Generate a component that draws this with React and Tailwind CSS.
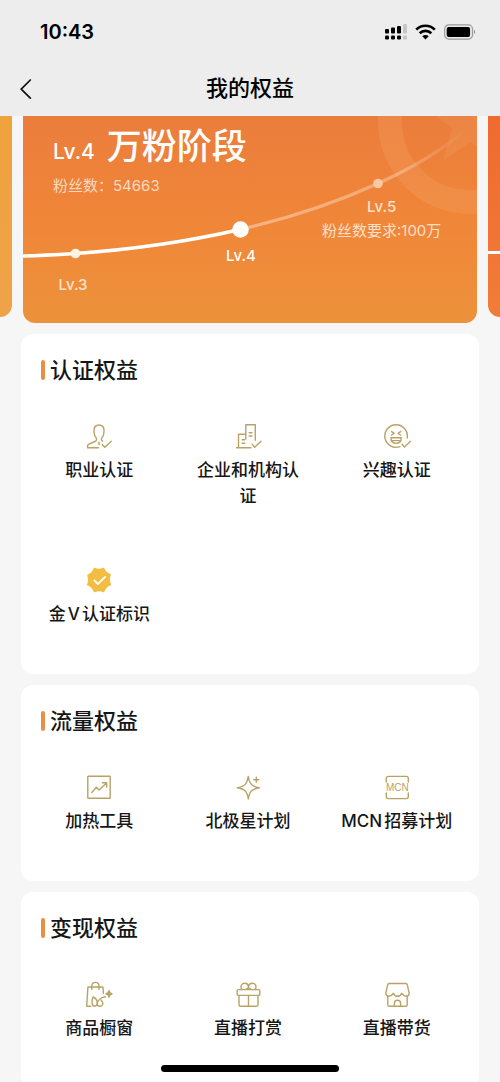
import clsx from 'clsx';

const GOLD = '#b8a266';

function LineIcon({ children }) {
  return (
    <svg
      className="h-[26px] w-7"
      viewBox="0 0 28 26"
      fill="none"
      stroke={GOLD}
      strokeWidth="1.4"
      strokeLinecap="round"
      strokeLinejoin="round"
      aria-hidden="true"
    >
      {children}
    </svg>
  );
}

function PersonIcon() {
  return (
    <LineIcon>
      <path d="M13.5 24.7H2.6v-1.8c0-.9.5-1.4 1.3-1.8l6-2.6c1.2-.5 1.7-1.2 1.7-2.3 0-1.2-.8-1.8-1.5-2.9C9.2 11.8 9 9.9 9 7.700 9 4.300 11 2 14 2s5 2.300 5 5.700c0 2.200-.2 4.100-1.100 5.600-.7 1.100-1.500 1.700-1.500 2.900 0 .9.400 1.500 1.100 1.900" />
      <path d="M14 19.200v2.600" />
      <path d="m17.200 21.500 2.600 2.800 6.400-6" />
    </LineIcon>
  );
}

function BuildingIcon() {
  return (
    <LineIcon>
      <path d="M2.600 24.700H17M4.500 24.500V11.300h7.300M11.800 16V1.700h9.500v15.600" />
      <path d="M15.200 9.800h2.800M15.200 13h2.800M8.200 16.800h2.600M8.200 20.300h2.600" />
      <path d="m18.200 21.500 2.500 2.800 6.300-6" />
    </LineIcon>
  );
}

function LaughIcon() {
  return (
    <LineIcon>
      <path d="M17 23.600A11.300 11.300 0 1 1 24.200 15" />
      <path d="m8.600 8.600 2.600 1.700-2.600 1.700M17.600 8.600 15 10.300l2.600 1.700" />
      <path d="M8 14.800h10.300c0 3.500-2 5.600-5.150 5.600S8 18.300 8 14.800ZM9.200 17.600h7.900" />
      <path d="m19 21.200 2.500 2.700 6-5.700" />
    </LineIcon>
  );
}

function GoldBadgeIcon() {
  return (
    <svg className="h-[26px] w-7" viewBox="0 0 28 26" fill="none" aria-hidden="true">
      <path
        d="M9.400 1.500Q14 3.600 18.600 1.500Q20.200 5.800 25.100 7.700Q23 13 25.300 17.600Q20.500 19.600 18.600 24.500Q14 22.400 9.400 24.500Q7.500 19.600 2.700 17.600Q5 13 2.900 8.400Q7.500 6.400 9.400 1.500Z"
        fill="#f3bd42"
        stroke="#f3bd42"
        strokeWidth="1.600"
        strokeLinejoin="round"
      />
      <path d="m9.500 13.500 3.400 3.500 7.200-7.200" stroke="#fff" strokeWidth="1.800" strokeLinecap="round" strokeLinejoin="round" />
    </svg>
  );
}

function ChartIcon() {
  return (
    <LineIcon>
      <rect x="2.800" y="2.300" width="22.400" height="22" rx=".4" />
      <path d="m6.800 18.500 4.500-5.300 2.700 2.700 7.600-7M17.400 8.700h4.300V13" />
    </LineIcon>
  );
}

function StarIcon() {
  return (
    <LineIcon>
      <path d="M14.300 2.400c1 7.300 3.600 10.200 11 11.300-7.400 1.100-10 4-11 11.300-1-7.300-3.600-10.200-11-11.300 7.400-1.100 10-4 11-11.300Z" />
      <path d="M22.300 3.200v5M19.800 5.700h5" />
    </LineIcon>
  );
}

function McnIcon() {
  return (
    <LineIcon>
      <path d="M3.300 8V4.400a2 2 0 0 1 2-2h18a2 2 0 0 1 2 2V8M3.300 19v3.600a2 2 0 0 0 2 2h18a2 2 0 0 0 2-2V19" />
      <text x="14.300" y="17" textAnchor="middle" fontSize="10" fill={GOLD} stroke="none" className="font-['Liberation_Sans',sans-serif]">
        MCN
      </text>
    </LineIcon>
  );
}

function BagIcon() {
  return (
    <LineIcon>
      <path d="M5.800 25.300H1.700L2.900 6h15l.5 6.500" />
      <path d="M6.800 8.300V5c0-2 1.500-3.600 3.600-3.600S14 3 14 5v3.300" />
      <path d="M8 16c-1.400 3.200-1.600 9.300 1.700 9.300 3.800 0 4-6.800-1.700-9.300Z" />
      <path d="M20.500 15.700c-5.500.3-9 5.500-8.200 8 .8 2.300 5 2.100 5.500-.6.300-1.600-.8-2.700-1.500-3.800" />
      <path d="M24 9.700c.4 2.200 1 2.800 3.100 3.200-2.100.4-2.700 1-3.100 3.200-.4-2.200-1-2.800-3.100-3.200 2.100-.4 2.700-1 3.100-3.200Z" fill={GOLD} />
    </LineIcon>
  );
}

function GiftIcon() {
  return (
    <LineIcon>
      <rect x="3.200" y="8.600" width="22.600" height="5.800" rx="1" />
      <path d="M5 14.400v9.300c0 1 .6 1.600 1.600 1.600h15.800c1 0 1.600-.6 1.600-1.600v-9.300M14.500 14.400v10.900" />
      <path d="M7.800 8.400C5.800 5 8 2.200 10.700 2.200c2.500 0 3.800 2 3.800 4.200 0-2.200 1.300-4.200 3.800-4.200 2.700 0 4.900 2.800 2.900 6.200M12.200 8.300l2.300-1.900 2.300 1.900" />
    </LineIcon>
  );
}

function ShopIcon() {
  return (
    <LineIcon>
      <path d="M4.700 3.700c.2-.8.600-1.200 1.400-1.200h16.800c.8 0 1.200.4 1.400 1.200l1.900 8.600c-.3 2-1.600 3-3.200 3-2.200 0-3-1.400-4.200-3-1 1.700-2.200 3-4.300 3s-3.300-1.300-4.300-3c-1.200 1.600-2 3-4.200 3-1.600 0-2.900-1-3.200-3Z" />
      <path d="M4.800 15.300v8.400c0 1 .6 1.600 1.600 1.600h16.200c1 0 1.600-.6 1.600-1.600v-8.400" />
      <path d="M11.400 25.300v-3.100c0-1.800 1.300-2.900 3.100-2.900s3.100 1.100 3.100 2.900v3.100" />
    </LineIcon>
  );
}

const sections = [
  {
    title: '认证权益',
    items: [
      { label: '职业认证', Icon: PersonIcon },
      { label: '企业和机构认证', Icon: BuildingIcon },
      { label: '兴趣认证', Icon: LaughIcon },
      { label: '金V认证标识', Icon: GoldBadgeIcon }
    ]
  },
  {
    title: '流量权益',
    items: [
      { label: '加热工具', Icon: ChartIcon },
      { label: '北极星计划', Icon: StarIcon },
      { label: 'MCN招募计划', Icon: McnIcon }
    ]
  },
  {
    title: '变现权益',
    items: [
      { label: '商品橱窗', Icon: BagIcon },
      { label: '直播打赏', Icon: GiftIcon },
      { label: '直播带货', Icon: ShopIcon }
    ]
  }
];

// label centres, as a share of the level card
const levels = [
  { name: 'Lv.3', spot: 'left-[11%] top-[76%]', tone: 'text-white/75' },
  { name: 'Lv.4', spot: 'left-[48%] top-[62%]', tone: 'text-white' },
  { name: 'Lv.5', note: '粉丝数要求:100万', spot: 'left-[79%] top-[38%]', tone: 'text-white/75' }
];

function StatusBar() {
  return (
    <div className="flex h-15 items-center justify-between pt-1 pr-6 pl-10">
      <span className="text-xl font-semibold">10:43</span>
      <div className="flex items-center gap-2">
        <svg className="h-4 w-[22px]" viewBox="0 0 22 16" aria-hidden="true">
          <g fill="#000">
            <rect x="0" y="5" width="4" height="4.500" rx="1" />
            <rect x="6" y="3.500" width="4" height="6" rx="1" />
            <rect x="12" y="2" width="4" height="7.500" rx="1" />
            <rect x="0" y="11.500" width="4" height="4" rx="1.300" />
            <rect x="6" y="11.500" width="4" height="4" rx="1.300" />
            <rect x="12" y="11.500" width="4" height="4" rx="1.300" />
          </g>
          <g fill="#c6c6c6">
            <rect x="18" y="0" width="4" height="9.500" rx="1" />
            <rect x="18" y="11.500" width="4" height="4" rx="1.300" />
          </g>
        </svg>
        <svg className="h-4 w-[21px]" viewBox="0 0 21 16" fill="none" stroke="#000" strokeWidth="2.700" aria-hidden="true">
          <path d="M1.200 5.600a13.200 13.200 0 0 1 18.600 0" />
          <path d="M4.700 9.200a8.200 8.200 0 0 1 11.600 0" />
          <path d="M7.300 12.200a4.600 4.600 0 0 1 6.400 0l-3.200 3.200Z" fill="#000" stroke="none" />
        </svg>
        <svg className="h-4 w-8" viewBox="0 0 32 16" aria-hidden="true">
          <rect x=".7" y=".9" width="27.800" height="14.200" rx="4" fill="none" stroke="#999" strokeWidth="1.200" />
          <rect x="2.700" y="2.900" width="23.400" height="10.200" rx="2" fill="#000" />
          <path d="M30 5.800c1.300.5 1.300 3.900 0 4.400Z" fill="#888" />
        </svg>
      </div>
    </div>
  );
}

function NavBar() {
  return (
    <header className="grid h-14 grid-cols-[1fr_auto_1fr] items-center px-5 pt-px">
      <button type="button" aria-label="返回" className="justify-self-start">
        <svg className="h-5 w-3" viewBox="0 0 12 20" fill="none" stroke="#111" strokeWidth="1.700" strokeLinecap="round" strokeLinejoin="round" aria-hidden="true">
          <path d="M10.300 1 1.200 10.200l9.100 9" />
        </svg>
      </button>
      <h1 className="text-[22px] font-medium">我的权益</h1>
    </header>
  );
}

function LevelCarousel() {
  return (
    <div className="flex items-start gap-[11px]">
      <div className="h-[201px] w-3 rounded-br-xl bg-gradient-to-b from-[#f0a23c] to-[#eea348]" />

      <section className="relative h-[207px] flex-1 overflow-hidden rounded-b-xl bg-gradient-to-b from-[#eb7d3c] via-[#f08638] to-[#ec923b] px-[30px] pt-1 text-white">
        <svg className="absolute inset-0 h-full w-full" viewBox="0 0 454 207" fill="none" aria-hidden="true">
          <defs>
            <linearGradient id="nextStage" x1="217" y1="0" x2="442" y2="0" gradientUnits="userSpaceOnUse">
              <stop offset="0" stopColor="#fff" stopOpacity=".38" />
              <stop offset=".7" stopColor="#fff" stopOpacity=".3" />
              <stop offset="1" stopColor="#fff" stopOpacity="0" />
            </linearGradient>
          </defs>
          <circle cx="447" cy="6" r="80" stroke="#f3a468" strokeOpacity=".28" strokeWidth="24" />
          <path d="m447-42 11 32 34 1-27 21 9 33-27-19-27 19 9-33-27-21 34-1Z" fill="#f3a468" fillOpacity=".22" />
          <path d="M0 140C20 139.500 36 138.500 52 137.500c58-4 113-12 165-24" stroke="#fff" strokeWidth="3.600" />
          <path d="M217 113.500c48-11 94-26 138-46 31-14 61-31 87-53" stroke="url(#nextStage)" strokeWidth="3.200" />
          <circle cx="52.500" cy="137.500" r="4.800" fill="#fff3e6" />
          <circle cx="217.500" cy="113.500" r="8.300" fill="#fff" />
          <circle cx="355" cy="67.500" r="4.800" fill="#f9c9a3" />
        </svg>

        <div className="relative">
          <h2 className="flex items-baseline gap-3 font-medium">
            <span className="text-[21px]">Lv.4</span>
            <span className="text-[35px] leading-[52px]">万粉阶段</span>
          </h2>
          <p className="text-[15px] leading-7 text-white/70">粉丝数：54663</p>
        </div>

        {levels.map(({ name, note, spot, tone }) => (
          <div key={name} className={clsx('absolute flex -translate-x-1/2 flex-col items-center text-[15px] leading-6 whitespace-nowrap', spot, tone)}>
            <span className="font-medium">{name}</span>
            {note && <span>{note}</span>}
          </div>
        ))}
      </section>

      <div className="h-[201px] w-3 rounded-bl-xl bg-gradient-to-b from-[#ef6a2f] to-[#f17c38] pt-[135px]">
        <div className="h-[3px] bg-white" />
      </div>
    </div>
  );
}

function BenefitSection({ title, items }) {
  return (
    <section className="rounded-xl bg-white pt-5 pb-[47px]">
      <h2 className="flex items-center gap-[5px] pl-5 text-[22px] leading-8 font-medium">
        <span className="h-5 w-1 rounded-full bg-[#e98f45]" />
        {title}
      </h2>
      <ul className="mt-[37px] grid grid-cols-3 gap-y-[58px] pr-2 pl-1">
        {items.map(({ label, Icon }) => (
          <li key={label}>
            <button
              type="button"
              className="flex w-full flex-col items-center gap-2 px-[18px] text-[17px] leading-[26px] font-medium [text-autospace:normal]"
            >
              <Icon />
              {label}
            </button>
          </li>
        ))}
      </ul>
    </section>
  );
}

export default function App() {
  return (
    <div className="relative flex h-screen flex-col overflow-hidden bg-[#f6f6f6] font-['Inter','Noto_Sans_CJK_SC',sans-serif] text-[#161616]">
      <div className="shrink-0 bg-[#ededed] text-black">
        <StatusBar />
        <NavBar />
      </div>

      <main className="min-h-0 flex-1 overflow-y-auto [scrollbar-width:none]">
        <LevelCarousel />
        <div className="mt-[11px] flex flex-col gap-[11px] px-[21px]">
          {sections.map((section) => (
            <BenefitSection key={section.title} {...section} />
          ))}
        </div>
      </main>

      <div className="absolute bottom-[10px] left-1/2 h-[7px] w-[178px] -translate-x-1/2 rounded-full bg-black" />
    </div>
  );
}
